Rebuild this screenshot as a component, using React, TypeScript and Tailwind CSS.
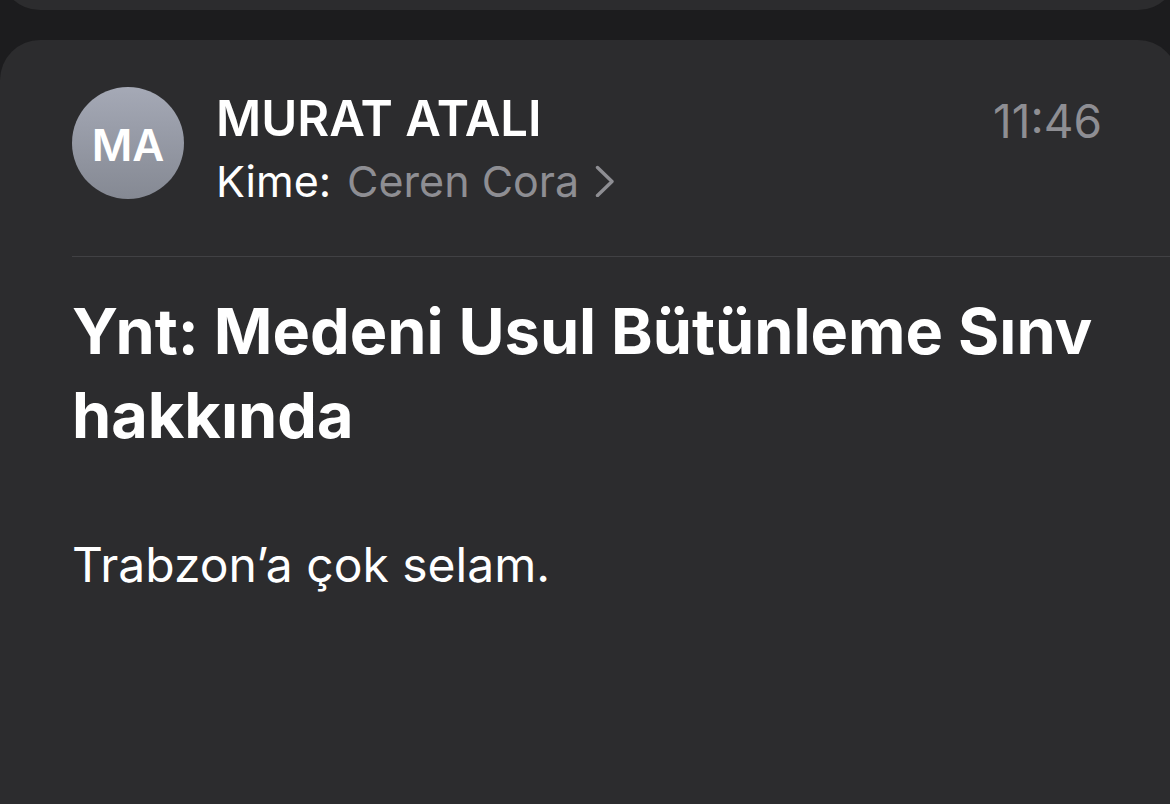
const message = {
  sender: 'MURAT ATALI',
  initials: 'MA',
  recipient: 'Ceren Cora',
  time: '11:46',
  subject: 'Ynt: Medeni Usul Bütünleme Sınv hakkında',
  body: 'Trabzon’a çok selam.',
};

function Avatar({ initials }: { initials: string }) {
  return (
    <div className="flex size-28 shrink-0 items-center justify-center rounded-full bg-linear-to-b from-[#a5a9b6] to-[#858993] pt-1 text-[44px] font-semibold text-white">
      {initials}
    </div>
  );
}

function ChevronRight() {
  return (
    <svg className="h-8 w-5" viewBox="0 0 20 32" fill="none" aria-hidden="true">
      <path
        d="M2.5 2.5 L17 16.5 L2.5 30.5"
        stroke="currentColor"
        strokeWidth="3.4"
        strokeLinecap="round"
        strokeLinejoin="round"
      />
    </svg>
  );
}

export default function App() {
  return (
    <div className="flex min-h-screen flex-col gap-[30px] overflow-hidden bg-[#1c1c1e] font-['Inter',sans-serif] text-white">
      {/* Bottom edge of the previous message */}
      <div className="-mr-2 flex h-[10px] items-end overflow-hidden">
        <div className="h-20 flex-1 shrink-0 rounded-[40px] bg-[#2c2c2e]" />
      </div>

      <article className="-mr-2 flex-1 rounded-t-[40px] bg-[#2c2c2e] pl-[72px]">
        <header className="flex items-start gap-8 border-b border-[#414144] pt-[47px] pr-[76px] pb-[45px]">
          <Avatar initials={message.initials} />
          <div className="flex-1">
            <h2 className="text-[49px] leading-[64px] font-semibold">{message.sender}</h2>
            <button type="button" className="flex items-center text-[43px] leading-[60px]">
              <span>Kime:</span>
              <span className="ml-4 text-[#8e8e93]">{message.recipient}</span>
              <span className="ml-4 text-[#8e8e93]">
                <ChevronRight />
              </span>
            </button>
          </div>
          <time className="text-[46px] leading-[68px] text-[#8e8e93]">{message.time}</time>
        </header>

        <div className="pt-8 pr-12">
          <h1 className="text-[63px] leading-[84px] font-bold">{message.subject}</h1>
          <p className="pt-[76px] text-[48px] leading-[64px]">{message.body}</p>
        </div>
      </article>
    </div>
  );
}
